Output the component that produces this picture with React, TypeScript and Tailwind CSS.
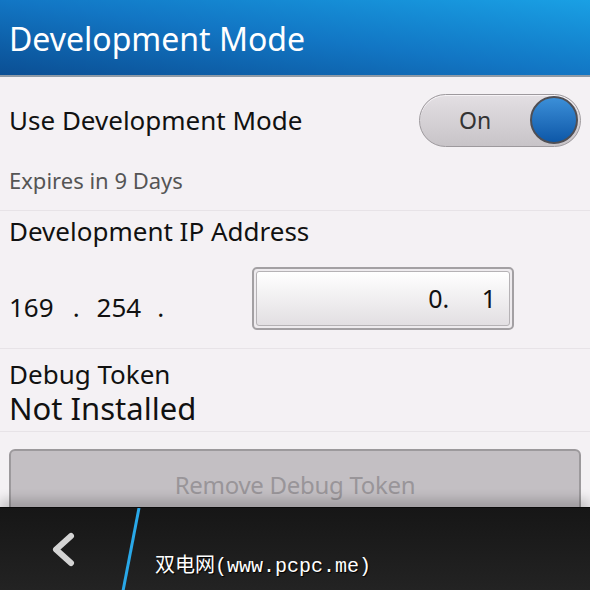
import React from 'react'

const font = { fontFamily: '"Noto Sans", "Open Sans", sans-serif' }

const App = () => {
  return (
    <div className="w-[590px] h-[590px] overflow-hidden flex flex-col bg-[#f4f1f4] text-[#111]" style={font}>
      {/* title bar */}
      <header className="h-[77px] shrink-0 flex items-center px-[9px] border-b-2 border-[#8e9aa6] bg-gradient-to-tr from-[#0b4f94] via-[#1276c4] to-[#1aa0e4]">
        <h1 className="text-[32px] leading-none text-white pt-[2px]">Development Mode</h1>
      </header>

      {/* settings body */}
      <main className="h-[430px] shrink-0 overflow-hidden flex flex-col">
        <div className="h-[86px] shrink-0 flex items-center justify-between px-[9px]">
          <span className="text-[26px]">Use Development Mode</span>
          <div className="w-[162px] h-[53px] rounded-full border border-[#9d999d] bg-gradient-to-b from-[#e3dfe3] to-[#c8c4c8] flex items-center justify-between pl-[39px] pr-[2px] shadow-[inset_0_1px_0_#f6f3f6]">
            <span className="text-[23px] text-[#333]">On</span>
            <div className="w-[48px] h-[48px] rounded-full border-2 border-[#4f4f55] bg-gradient-to-b from-[#3b8fd8] to-[#0d58a8]" />
          </div>
        </div>

        <div className="h-[48px] shrink-0 flex items-center px-[9px] pb-[12px] border-b border-[#e7e3e7]">
          <span className="text-[22px] text-[#555]">Expires in 9 Days</span>
        </div>

        <div className="h-[138px] shrink-0 flex flex-col px-[9px] border-b border-[#e7e3e7]">
          <span className="text-[26px] mt-[1px]">Development IP Address</span>
          <div className="flex items-end mt-[16px]">
            <div className="w-[243px] flex text-[26px] pb-[3px]">
              <span>169</span>
              <span className="ml-[19px]">.</span>
              <span className="ml-[17px]">254</span>
              <span className="ml-[16px]">.</span>
            </div>
            <div className="w-[262px] h-[63px] rounded-[5px] border-2 border-[#a3a0a3] p-[2px] bg-[#eeebee]">
              <div className="h-full rounded-[3px] border border-[#b5b2b5] bg-gradient-to-b from-white to-[#e2dfe2] flex items-center justify-end pr-[13px]">
                <span className="text-[25px] whitespace-pre">0.     1</span>
              </div>
            </div>
          </div>
        </div>

        <div className="h-[83px] shrink-0 flex flex-col px-[9px] pt-[12px] border-b border-[#e7e3e7]">
          <span className="text-[26px] leading-none">Debug Token</span>
          <span className="text-[31px] leading-none mt-[6px]">Not Installed</span>
        </div>

        <div className="shrink-0 px-[9px] mt-[17px]">
          <div className="h-[70px] rounded-[6px] border-2 border-[#9c999c] bg-[#c3bfc3] flex justify-center pt-[16px]">
            <span className="text-[24px] text-[#999599] tracking-[-0.3px]">Remove Debug Token</span>
          </div>
        </div>
      </main>

      {/* action bar */}
      <footer className="h-[83px] shrink-0 relative bg-gradient-to-b from-[#161616] to-[#232323] border-t border-[#0a0a0a] shadow-[0_-8px_10px_rgba(0,0,0,0.18)]">
        <svg className="absolute left-0 top-0" width="160" height="83">
          <polyline points="71,28 56,41.5 71,55" fill="none" stroke="#d4d4d4" strokeWidth="6" strokeLinecap="round" strokeLinejoin="round" />
          <line x1="139" y1="0" x2="123" y2="83" stroke="#29a8e8" strokeWidth="3" />
        </svg>
        <div
          className="absolute left-[155px] top-[46px] text-white text-[20px] leading-none whitespace-pre"
          style={{ fontFamily: '"Noto Sans CJK SC", sans-serif', textShadow: '1px 1px 1px #000' }}
        >
          双电网<span style={{ fontFamily: '"Liberation Mono", "DejaVu Sans Mono", monospace' }}>(www.pcpc.me)</span>
        </div>
      </footer>
    </div>
  )
}

export default App
